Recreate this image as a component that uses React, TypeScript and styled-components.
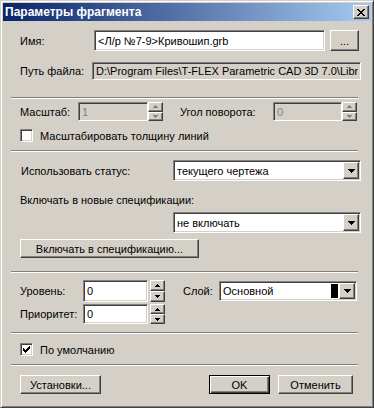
import { FunctionComponent, ReactNode } from 'react'
import styled, { createGlobalStyle, css } from 'styled-components'

const GlobalStyle = createGlobalStyle`
  html, body {
    margin: 0;
    padding: 0;
    background: #d4d0c8;
  }
  body {
    font-family: "Liberation Sans", Arial, sans-serif;
    font-size: 11px;
    color: #000;
  }
`

const raised = css`
  box-sizing: border-box;
  background: #d4d0c8;
  border: 1px solid;
  border-color: #fff #404040 #404040 #fff;
  box-shadow: inset -1px -1px #808080, inset 1px 1px #d4d0c8;
`

const sunken = css`
  box-sizing: border-box;
  border: 1px solid;
  border-color: #808080 #fff #fff #808080;
  box-shadow: inset 1px 1px #404040, inset -1px -1px #d4d0c8;
`

const Window = styled.div`
  width: 374px;
  height: 408px;
  box-sizing: border-box;
  background: #d4d0c8;
  border: 1px solid;
  border-color: #d4d0c8 #404040 #404040 #d4d0c8;
  box-shadow: inset 1px 1px #fff, inset -1px -1px #808080;
  padding: 2px;
  display: flex;
  flex-direction: column;
`

const TitleBar = styled.div`
  height: 18px;
  flex: none;
  display: flex;
  align-items: center;
  justify-content: space-between;
  padding: 0 2px 0 2px;
  background: linear-gradient(to right, #0a246a, #a6caf0);
`

const Title = styled.span`
  color: #fff;
  font-weight: bold;
  font-size: 12px;
  white-space: nowrap;
`

const CloseButton = styled.div`
  ${raised};
  width: 16px;
  height: 14px;
  display: flex;
  align-items: center;
  justify-content: center;
`

const Body = styled.div`
  flex: 1;
  margin-top: 1px;
  display: flex;
  flex-direction: column;
`

const Row = styled.div<{ $mt: number; $h: number; $pl?: number }>`
  display: flex;
  align-items: center;
  height: ${p => p.$h}px;
  margin-top: ${p => p.$mt}px;
  padding-left: ${p => p.$pl ?? 17}px;
  flex: none;
`

const Label = styled.span<{ $w?: number; $ml?: number }>`
  width: ${p => (p.$w ? `${p.$w}px` : 'auto')};
  margin-left: ${p => p.$ml ?? 0}px;
  flex: none;
  white-space: nowrap;
`

const Sep = styled.div<{ $mt: number }>`
  margin: ${p => p.$mt}px 0 0 8px;
  width: 347px;
  height: 0;
  flex: none;
  border-top: 1px solid #808080;
  border-bottom: 1px solid #fff;
`

const Field = styled.div<{ $w: number; $h: number; $ml?: number; $bg?: string; $fg?: string }>`
  ${sunken};
  width: ${p => p.$w}px;
  height: ${p => p.$h}px;
  margin-left: ${p => p.$ml ?? 0}px;
  flex: none;
  background: ${p => p.$bg ?? '#fff'};
  color: ${p => p.$fg ?? '#000'};
  display: flex;
  align-items: center;
  padding: 2px 2px 2px 3px;
  overflow: hidden;
  white-space: nowrap;
`

const FieldText = styled.span`
  flex: 1;
  overflow: hidden;
  white-space: nowrap;
`

const Swatch = styled.span`
  width: 7px;
  height: 14px;
  background: #000;
  margin-right: 1px;
  flex: none;
`

const DropButton = styled.div`
  ${raised};
  width: 16px;
  align-self: stretch;
  margin: -1px -1px -1px 0;
  display: flex;
  align-items: center;
  justify-content: center;
  flex: none;
`

const Spin = styled.div<{ $h: number; $ml?: number }>`
  display: flex;
  flex-direction: column;
  width: 15px;
  height: ${p => p.$h}px;
  margin-left: ${p => p.$ml ?? 0}px;
  flex: none;
`

const SpinHalf = styled.div`
  ${raised};
  flex: 1;
  display: flex;
  align-items: center;
  justify-content: center;
`

const Button = styled.div<{ $w: number; $ml?: number; $default?: boolean }>`
  ${raised};
  width: ${p => p.$w}px;
  height: 100%;
  margin-left: ${p => p.$ml ?? 0}px;
  display: flex;
  align-items: center;
  justify-content: center;
  flex: none;
  white-space: nowrap;
  ${p =>
    p.$default &&
    css`
      border: 1px solid #000;
      box-shadow: inset 1px 1px #fff, inset -1px -1px #404040, inset -2px -2px #808080;
    `}
`

const CheckBox = styled.div`
  ${sunken};
  width: 13px;
  height: 13px;
  background: #fff;
  flex: none;
  display: flex;
  align-items: center;
  justify-content: center;
`

const CheckLabel = styled.span`
  margin-left: 7px;
  white-space: nowrap;
`

const CloseGlyph = () => (
  <svg width="8" height="7" viewBox="0 0 8 7" shapeRendering="crispEdges">
    <path d="M0 0h2v1H0zM6 0h2v1H6zM1 1h2v1H1zM5 1h2v1H5zM2 2h4v1H2zM3 3h2v1H3zM2 4h4v1H2zM1 5h2v1H1zM5 5h2v1H5zM0 6h2v1H0zM6 6h2v1H6z" fill="#000" />
  </svg>
)

const DownArrow = () => (
  <svg width="7" height="4" viewBox="0 0 7 4" shapeRendering="crispEdges">
    <path d="M0 0h7v1H0zM1 1h5v1H1zM2 2h3v1H2zM3 3h1v1H3z" fill="#000" />
  </svg>
)

const SmallArrow: FunctionComponent<{ up?: boolean; color: string }> = ({ up, color }) => (
  <svg width="5" height="3" viewBox="0 0 5 3" shapeRendering="crispEdges">
    <path
      d={up ? 'M2 0h1v1H2zM1 1h3v1H1zM0 2h5v1H0z' : 'M0 0h5v1H0zM1 1h3v1H1zM2 2h1v1H2z'}
      fill={color}
    />
  </svg>
)

const CheckMark = () => (
  <svg width="7" height="7" viewBox="0 0 7 7" shapeRendering="crispEdges">
    <path d="M6 0h1v3H6zM5 1h1v3H5zM4 2h1v3H4zM3 3h1v3H3zM2 4h1v3H2zM1 3h1v3H1zM0 2h1v3H0z" fill="#000" />
  </svg>
)

const SpinBox: FunctionComponent<{ h: number; ml?: number; disabled?: boolean }> = ({ h, ml, disabled }) => {
  const color = disabled ? '#808080' : '#000'
  return (
    <Spin $h={h} $ml={ml}>
      <SpinHalf>
        <SmallArrow up color={color} />
      </SpinHalf>
      <SpinHalf>
        <SmallArrow color={color} />
      </SpinHalf>
    </Spin>
  )
}

const Combo: FunctionComponent<{ w: number; h: number; ml?: number; children: ReactNode; swatch?: boolean }> = ({
  w,
  h,
  ml,
  children,
  swatch,
}) => (
  <Field $w={w} $h={h} $ml={ml}>
    <FieldText>{children}</FieldText>
    {swatch && <Swatch />}
    <DropButton>
      <DownArrow />
    </DropButton>
  </Field>
)

export default function App() {
  return (
    <>
      <GlobalStyle />
      <Window>
        <TitleBar>
          <Title>Параметры фрагмента</Title>
          <CloseButton>
            <CloseGlyph />
          </CloseButton>
        </TitleBar>
        <Body>
          <Row $mt={8} $h={21}>
            <Label $w={74}>Имя:</Label>
            <Field $w={231} $h={21}>
              <FieldText>&lt;Л/р №7-9&gt;Кривошип.grb</FieldText>
            </Field>
            <Button $w={29} $ml={5}>...</Button>
          </Row>
          <Row $mt={11} $h={18}>
            <Label $w={72}>Путь файла:</Label>
            <Field $w={269} $h={18} $bg="#d4d0c8">
              <FieldText>D:\Program Files\T-FLEX Parametric CAD 3D 7.0\Libr</FieldText>
            </Field>
          </Row>
          <Sep $mt={17} />
          <Row $mt={3} $h={19}>
            <Label $w={58}>Масштаб:</Label>
            <Field $w={70} $h={19} $bg="#d4d0c8" $fg="#808080">
              <FieldText>1</FieldText>
            </Field>
            <SpinBox h={19} disabled />
            <Label $w={93} $ml={17}>Угол поворота:</Label>
            <Field $w={69} $h={19} $bg="#d4d0c8" $fg="#808080">
              <FieldText>0</FieldText>
            </Field>
            <SpinBox h={19} disabled />
          </Row>
          <Row $mt={7} $h={15}>
            <CheckBox />
            <CheckLabel>Масштабировать толщину линий</CheckLabel>
          </Row>
          <Sep $mt={7} />
          <Row $mt={8} $h={21} $pl={18}>
            <Label $w={152}>Использовать статус:</Label>
            <Combo w={188} h={21}>текущего чертежа</Combo>
          </Row>
          <Row $mt={12} $h={14}>
            <Label>Включать в новые спецификации:</Label>
          </Row>
          <Row $mt={5} $h={21}>
            <Combo w={188} h={21} ml={153}>не включать</Combo>
          </Row>
          <Row $mt={6} $h={19}>
            <Button $w={179}>Включать в спецификацию...</Button>
          </Row>
          <Sep $mt={13} />
          <Row $mt={7} $h={22}>
            <Label $w={63}>Уровень:</Label>
            <Field $w={65} $h={22}>
              <FieldText>0</FieldText>
            </Field>
            <SpinBox h={22} ml={2} />
            <Label $w={36} $ml={18}>Слой:</Label>
            <Combo w={138} h={20} swatch>Основной</Combo>
          </Row>
          <Row $mt={2} $h={20}>
            <Label $w={63}>Приоритет:</Label>
            <Field $w={65} $h={20}>
              <FieldText>0</FieldText>
            </Field>
            <SpinBox h={20} ml={2} />
          </Row>
          <Sep $mt={8} />
          <Row $mt={8} $h={15}>
            <CheckBox>
              <CheckMark />
            </CheckBox>
            <CheckLabel>По умолчанию</CheckLabel>
          </Row>
          <Sep $mt={7} />
          <Row $mt={9} $h={19}>
            <Button $w={81}>Установки...</Button>
            <Button $w={61} $ml={108} $default>
              OK
            </Button>
            <Button $w={75} $ml={8}>Отменить</Button>
          </Row>
        </Body>
      </Window>
    </>
  )
}
